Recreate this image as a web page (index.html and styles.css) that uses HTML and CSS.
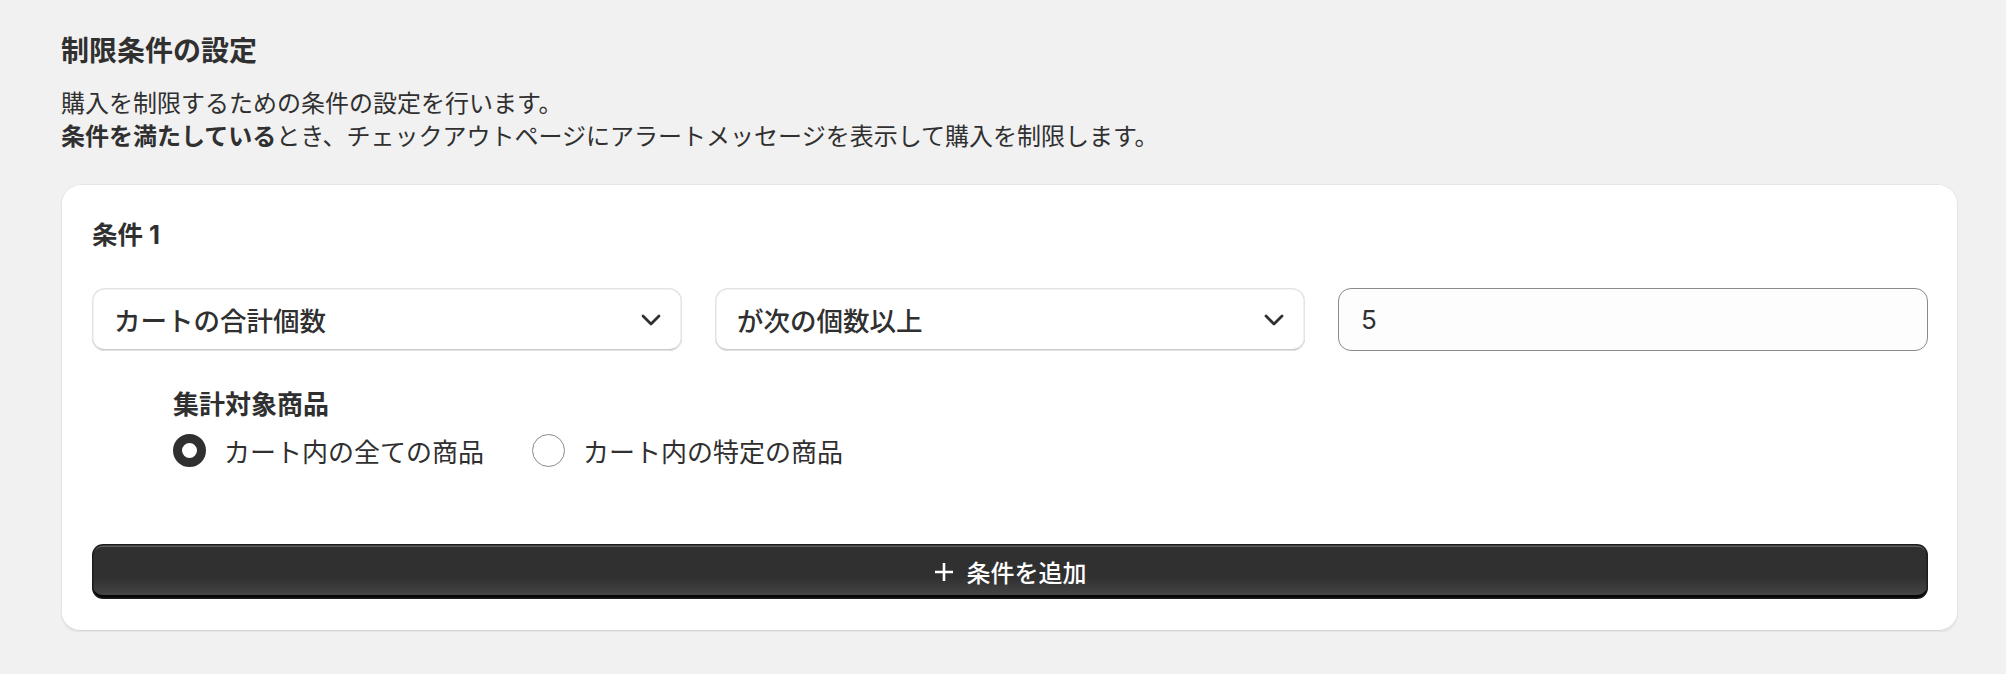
FILE: index.html
```html
<!DOCTYPE html>
<html lang="ja">
<head>
<meta charset="utf-8">
<title>制限条件の設定</title>
<link rel="stylesheet" href="styles.css">
</head>
<body>
<main class="page">
  <h1 class="title">制限条件の設定</h1>
  <p class="desc">購入を制限するための条件の設定を行います。<br><strong>条件を満たしている</strong>とき、チェックアウトページにアラートメッセージを表示して購入を制限します。</p>

  <section class="card">
    <h2 class="cond-label">条件 1</h2>

    <div class="fields">
      <div class="select">
        <span class="select-text">カートの合計個数</span>
        <svg class="chevron" viewBox="0 0 20 12" aria-hidden="true"><polyline points="2,2 10,10 18,2"/></svg>
      </div>
      <div class="select">
        <span class="select-text">が次の個数以上</span>
        <svg class="chevron" viewBox="0 0 20 12" aria-hidden="true"><polyline points="2,2 10,10 18,2"/></svg>
      </div>
      <div class="input">5</div>
    </div>

    <div class="target">
      <div class="target-label">集計対象商品</div>
      <div class="radios">
        <label class="radio-item"><span class="radio checked"></span><span class="radio-text">カート内の全ての商品</span></label>
        <label class="radio-item"><span class="radio"></span><span class="radio-text">カート内の特定の商品</span></label>
      </div>
    </div>

    <button class="add-btn" type="button">
      <svg class="plus" viewBox="0 0 20 20" aria-hidden="true"><path d="M10 1v18M1 10h18"/></svg>
      <span>条件を追加</span>
    </button>
  </section>
</main>
</body>
</html>
```

FILE: styles.css
```css
* { box-sizing: border-box; }

html, body {
  margin: 0;
  background: #f1f1f1;
}

body {
  font-family: Inter, "Noto Sans CJK JP", sans-serif;
  color: #303030;
}

.page {
  padding: 33px 48px 0 61px;
}

.title {
  margin: 0;
  font-size: 28px;
  line-height: 36px;
  font-weight: 700;
}

.desc {
  margin: 18px 0 0;
  font-size: 24px;
  line-height: 33px;
  font-weight: 400;
}

.desc strong {
  font-weight: 700;
}

.card {
  margin-top: 31px;
  background: #fff;
  border-radius: 20px;
  padding: 31px 30px 33px 31px;
  display: flex;
  flex-direction: column;
  box-shadow:
    inset 0 0 0 1px #e6e6e6,
    inset 0 -2px 0 0 #d6d6d6,
    0 1px 2px rgba(0, 0, 0, 0.06);
}

.cond-label {
  margin: 0;
  font-size: 25.5px;
  line-height: 40px;
  font-weight: 700;
}

.fields {
  margin-top: 33px;
  display: grid;
  grid-template-columns: 1fr 1fr 1fr;
  gap: 33px;
}

.select {
  height: 63px;
  border-radius: 13px;
  background: #fff;
  display: flex;
  align-items: center;
  justify-content: space-between;
  padding: 0 21px 0 22px;
  box-shadow:
    inset 0 0 0 1.5px #e3e3e3,
    inset 0 -2px 0 0 #b5b5b5;
}

.select-text {
  font-size: 26.5px;
  font-weight: 500;
}

.chevron {
  width: 20px;
  height: 12px;
  fill: none;
  stroke: #303030;
  stroke-width: 2.8;
  stroke-linecap: round;
  stroke-linejoin: round;
}

.input {
  height: 63px;
  border-radius: 13px;
  border: 1px solid #8a8a8a;
  background: #fdfdfd;
  display: flex;
  align-items: center;
  padding: 0 22px;
  font-size: 26px;
  font-weight: 400;
}

.target {
  margin-top: 36px;
  padding-left: 81px;
}

.target-label {
  font-size: 26px;
  line-height: 36px;
  font-weight: 700;
}

.radios {
  margin-top: 11px;
  display: flex;
  align-items: center;
  gap: 48px;
}

.radio-item {
  display: flex;
  align-items: center;
  gap: 18px;
  height: 33px;
}

.radio {
  width: 33px;
  height: 33px;
  border-radius: 50%;
  border: 1.5px solid #8a8a8a;
  background: #fff;
  flex: none;
}

.radio.checked {
  border: 9px solid #303030;
}

.radio-text {
  font-size: 26px;
  font-weight: 400;
}

.add-btn {
  margin-top: 77px;
  height: 55px;
  width: 100%;
  border: 0;
  border-radius: 11px;
  background-color: #303030;
  background-image: linear-gradient(180deg, rgba(48, 48, 48, 0) 60%, rgba(255, 255, 255, 0.12) 100%);
  box-shadow:
    inset 0 0 0 1.5px #1c1c1c,
    inset 0 3px 0 0 #5e5e5e,
    inset 0 -4px 0 0 #050505;
  color: #fff;
  font-family: Inter, "Noto Sans CJK JP", sans-serif;
  font-size: 24px;
  font-weight: 500;
  display: flex;
  align-items: center;
  justify-content: center;
  gap: 13px;
  padding: 0;
}

.plus {
  width: 20px;
  height: 20px;
  fill: none;
  stroke: #fff;
  stroke-width: 2.6;
}
```
